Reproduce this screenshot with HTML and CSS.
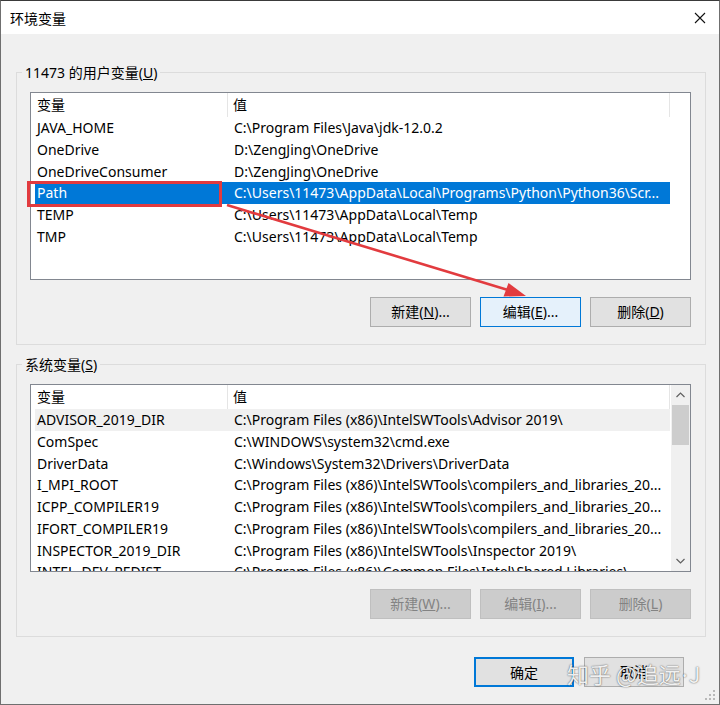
FILE: index.html
```html
<!DOCTYPE html>
<html lang="zh-CN">
<head>
<meta charset="utf-8">
<title>环境变量</title>
<link rel="stylesheet" href="styles.css">
</head>
<body>
<div class="window">
  <div class="titlebar">
    <span class="title">环境变量</span>
    <svg class="close" width="12" height="12" viewBox="0 0 12 12"><path d="M1 1 L11 11 M11 1 L1 11" stroke="#111" stroke-width="1.1" fill="none"/></svg>
  </div>
  <div class="client">
    <fieldset class="group">
      <legend>11473 的用户变量(<u>U</u>)</legend>
      <div class="list">
        <div class="lv-body">
          <div class="lv-header"><div class="c1">变量</div><div class="c2">值</div></div>
          <div class="row"><div class="c1">JAVA_HOME</div><div class="c2">C:\Program Files\Java\jdk-12.0.2</div></div>
          <div class="row"><div class="c1">OneDrive</div><div class="c2">D:\ZengJing\OneDrive</div></div>
          <div class="row"><div class="c1">OneDriveConsumer</div><div class="c2">D:\ZengJing\OneDrive</div></div>
          <div class="row selected"><div class="c1">Path</div><div class="c2">C:\Users\11473\AppData\Local\Programs\Python\Python36\Scr...</div></div>
          <div class="row"><div class="c1">TEMP</div><div class="c2">C:\Users\11473\AppData\Local\Temp</div></div>
          <div class="row"><div class="c1">TMP</div><div class="c2">C:\Users\11473\AppData\Local\Temp</div></div>
        </div>
      </div>
      <div class="btns">
        <button class="btn">新建(<u>N</u>)...</button>
        <button class="btn hot">编辑(<u>E</u>)...</button>
        <button class="btn">删除(<u>D</u>)</button>
      </div>
    </fieldset>
    <fieldset class="group group-sys">
      <legend>系统变量(<u>S</u>)</legend>
      <div class="list">
        <div class="lv-body">
          <div class="lv-header"><div class="c1">变量</div><div class="c2">值</div></div>
          <div class="row inactive"><div class="c1">ADVISOR_2019_DIR</div><div class="c2">C:\Program Files (x86)\IntelSWTools\Advisor 2019\</div></div>
          <div class="row"><div class="c1">ComSpec</div><div class="c2">C:\WINDOWS\system32\cmd.exe</div></div>
          <div class="row"><div class="c1">DriverData</div><div class="c2">C:\Windows\System32\Drivers\DriverData</div></div>
          <div class="row"><div class="c1">I_MPI_ROOT</div><div class="c2">C:\Program Files (x86)\IntelSWTools\compilers_and_libraries_20...</div></div>
          <div class="row"><div class="c1">ICPP_COMPILER19</div><div class="c2">C:\Program Files (x86)\IntelSWTools\compilers_and_libraries_20...</div></div>
          <div class="row"><div class="c1">IFORT_COMPILER19</div><div class="c2">C:\Program Files (x86)\IntelSWTools\compilers_and_libraries_20...</div></div>
          <div class="row"><div class="c1">INSPECTOR_2019_DIR</div><div class="c2">C:\Program Files (x86)\IntelSWTools\Inspector 2019\</div></div>
          <div class="row"><div class="c1">INTEL_DEV_REDIST</div><div class="c2">C:\Program Files (x86)\Common Files\Intel\Shared Libraries\</div></div>
        </div>
        <div class="scrollbar">
          <svg class="arrow" width="19" height="20" viewBox="0 0 19 20"><path d="M5.5 12 L9.5 8 L13.5 12" stroke="#606060" stroke-width="1.2" fill="none"/></svg>
          <div class="track"><div class="thumb"></div></div>
          <svg class="arrow" width="19" height="20" viewBox="0 0 19 20"><path d="M5.5 8 L9.5 12 L13.5 8" stroke="#606060" stroke-width="1.2" fill="none"/></svg>
        </div>
      </div>
      <div class="btns">
        <button class="btn" disabled>新建(<u>W</u>)...</button>
        <button class="btn" disabled>编辑(<u>I</u>)...</button>
        <button class="btn" disabled>删除(<u>L</u>)</button>
      </div>
    </fieldset>
    <div class="dlg-btns">
      <button class="btn default">确定</button>
      <button class="btn">取消</button>
    </div>
  </div>

  <div class="redbox"></div>
  <svg class="annot" width="720" height="705" viewBox="0 0 720 705">
    <line x1="227" y1="205" x2="508" y2="290" stroke="#e23b3f" stroke-width="2.6"/>
    <polygon points="526,296 503.5,296.5 508.5,283" fill="#e23b3f"/>
  </svg>
  <div class="watermark">知乎 @追远<span class="dot">·</span>J</div>
  <svg class="grip" width="10" height="10" viewBox="0 0 10 10">
    <rect x="8" y="0" width="2" height="2" fill="#b8b8b8"/>
    <rect x="4" y="4" width="2" height="2" fill="#b8b8b8"/>
    <rect x="8" y="4" width="2" height="2" fill="#b8b8b8"/>
    <rect x="0" y="8" width="2" height="2" fill="#b8b8b8"/>
    <rect x="4" y="8" width="2" height="2" fill="#b8b8b8"/>
    <rect x="8" y="8" width="2" height="2" fill="#b8b8b8"/>
  </svg>
</div>
</body>
</html>
```
FILE: styles.css
```css
* { box-sizing: border-box; }
html, body { margin: 0; padding: 0; background: #f0f0f0; }
body {
  font-family: "Noto Sans", "Noto Sans CJK SC", sans-serif;
  font-size: 14px;
  color: #000;
}
.window {
  position: relative;
  width: 720px;
  height: 705px;
  border: 1px solid #6f6f6f;
  border-top-color: #3a3a3a;
  background: #f0f0f0;
  overflow: hidden;
}
.titlebar {
  height: 33px;
  background: #fff;
  display: flex;
  align-items: center;
  justify-content: space-between;
  padding: 0 13px 0 9px;
}
.title { font-size: 14px; color: #000; }
.close { display: block; }
.client { padding-left: 15px; }
.group {
  width: 690px;
  margin: 30px 0 0 0;
  padding: 11px 14px 17px 13px;
  border: 1px solid #dcdcdc;
  min-width: 0;
}
.group-sys { margin-top: 11px; }
.group legend {
  padding: 0 3px;
  margin-left: -8px;
  line-height: 17px;
  height: 17px;
  color: #000;
}
.list {
  height: 188px;
  border: 1px solid #828790;
  background: #fff;
  display: flex;
  overflow: hidden;
}
.lv-body { flex: 1; min-width: 0; overflow: hidden; }
.lv-header, .row {
  display: flex;
  margin-left: 4px;
  width: 635px;
  white-space: nowrap;
}
.lv-header { height: 24px; align-items: center; }
.lv-header .c1 { width: 193px; border-right: 1px solid #e5e5e5; height: 24px; line-height: 24px; padding-left: 2px; }
.lv-header .c2 { width: 442px; border-right: 1px solid #e5e5e5; height: 24px; line-height: 24px; padding-left: 5px; }
.row { height: 21.75px; line-height: 22.5px; }
.row .c1 { width: 193px; padding-left: 2px; overflow: hidden; }
.row .c2 { width: 442px; padding-left: 6px; overflow: hidden; }
.row.selected { background: #0078d7; color: #fff; }
.row.inactive { background: #f0f0f0; }
.scrollbar {
  width: 19px;
  background: #f0f0f0;
  display: flex;
  flex-direction: column;
}
.scrollbar .arrow { display: block; flex: none; }
.track { flex: 1; }
.thumb { margin: 0 1px; height: 40px; background: #cdcdcd; }
.btns {
  display: flex;
  justify-content: flex-end;
  gap: 9px;
  margin-top: 17px;
}
.btn {
  width: 101px;
  height: 30px;
  font: inherit;
  color: #000;
  background: #e1e1e1;
  border: 1px solid #adadad;
  padding: 0;
  line-height: 28px;
}
.btn.hot { background: #e5f1fb; border-color: #0078d7; }
.btn:disabled { background: #cccccc; border-color: #bfbfbf; color: #838383; }
.dlg-btns {
  display: flex;
  justify-content: flex-end;
  gap: 10px;
  margin-top: 20px;
  padding-right: 35px;
}
.dlg-btns .btn { width: 100px; }
.btn.default { border: 2px solid #0078d7; }
.redbox {
  position: absolute;
  left: 26px;
  top: 180px;
  width: 195px;
  height: 26px;
  border: 3px solid #e23b3f;
}
.annot { position: absolute; left: -1px; top: -1px; pointer-events: none; }
.watermark {
  position: absolute;
  left: 566px;
  top: 657px;
  font-family: "Noto Sans CJK SC", sans-serif;
  font-size: 22px;
  line-height: 30px;
  color: rgba(255, 255, 255, 0.92);
  text-shadow: 0 0 2px rgba(0, 0, 0, 0.45), 0 0 1px rgba(0, 0, 0, 0.4);
  white-space: nowrap;
}
.watermark .dot { font-family: "Noto Sans", sans-serif; margin: 0 1px; }
.grip { position: absolute; right: 4px; bottom: 4px; }
```
